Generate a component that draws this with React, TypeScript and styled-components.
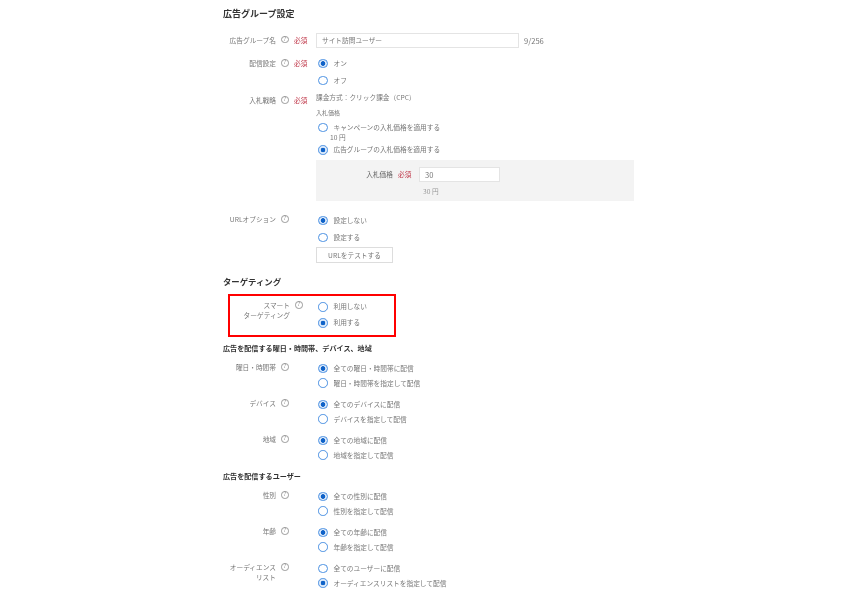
import React from "react";
import styled, { createGlobalStyle } from "styled-components";

const Global = createGlobalStyle`
  html, body {
    margin: 0;
    padding: 0;
    background: #fff;
  }
  body {
    font-family: "Noto Sans CJK JP", "Liberation Sans", sans-serif;
    font-size: 6.7px;
    color: #777;
  }
`;

const Page = styled.div`
  width: 850px;
  height: 600px;
  overflow: hidden;
  box-sizing: border-box;
  padding: 8px 0 0 223px;
  filter: blur(0.45px);
`;

const Heading = styled.h2<{ $top?: number; $size: number }>`
  margin: ${({ $top }) => $top ?? 0}px 0 0;
  font-size: ${({ $size }) => $size}px;
  line-height: 12px;
  font-weight: 700;
  color: #333;
`;

const SubHeading = styled.h3<{ $top: number }>`
  margin: ${({ $top }) => $top}px 0 0;
  font-size: 7.1px;
  line-height: 10px;
  font-weight: 700;
  color: #333;
`;

const Row = styled.div<{ $top: number }>`
  display: flex;
  align-items: flex-start;
  margin: ${({ $top }) => $top}px 0 0 6px;
`;

const Label = styled.div<{ $width?: number; $pad: number }>`
  width: ${({ $width }) => $width ?? 47}px;
  padding-top: ${({ $pad }) => $pad}px;
  flex: none;
  text-align: right;
  line-height: 10px;
  white-space: pre-line;
  color: #777;
`;

const Help = styled.span<{ $pad: number }>`
  flex: none;
  box-sizing: border-box;
  width: 7.5px;
  height: 7.5px;
  margin: ${({ $pad }) => $pad + 1}px -0.5px 0 5px;
  border: 0.8px solid #999;
  border-radius: 50%;
  font-size: 5.5px;
  line-height: 5.9px;
  text-align: center;
  color: #888;
`;

const Required = styled.span<{ $pad: number }>`
  flex: none;
  width: 14px;
  padding-top: ${({ $pad }) => $pad}px;
  margin: 0 8px 0 6px;
  line-height: 10px;
  color: #c0394b;
`;

const Spacer = styled.span<{ $width: number }>`
  flex: none;
  width: ${({ $width }) => $width}px;
`;

const Control = styled.div`
  flex: 1;
  min-width: 0;
`;

const Option = styled.div<{ $height: number; $top?: number }>`
  display: flex;
  align-items: center;
  height: ${({ $height }) => $height}px;
  margin-top: ${({ $top }) => $top ?? 0}px;
  padding-left: 2px;
`;

const Dot = styled.span<{ $on?: boolean }>`
  flex: none;
  box-sizing: border-box;
  width: 9.5px;
  height: 9.5px;
  margin-right: 6px;
  border: 1px solid #4a90e2;
  border-radius: 50%;
  background: ${({ $on }) =>
    $on
      ? "radial-gradient(circle, #0f62c8 0, #0f62c8 2px, #dbe9fa 2.6px)"
      : "#fff"};
`;

const OptionText = styled.span<{ $lift: number }>`
  line-height: 10px;
  margin-bottom: ${({ $lift }) => $lift}px;
`;

const Plain = styled.div<{ $top?: number; $left?: number; $height: number; $small?: boolean }>`
  margin: ${({ $top }) => $top ?? 0}px 0 0 ${({ $left }) => $left ?? 0}px;
  line-height: ${({ $height }) => $height}px;
  font-size: ${({ $small }) => ($small ? 6 : 6.7)}px;
`;

const TextInput = styled.div<{ $width: number; $size?: number }>`
  box-sizing: border-box;
  width: ${({ $width }) => $width}px;
  height: 15px;
  padding-left: 5px;
  border: 1px solid #e4e4e4;
  background: #fff;
  font-size: ${({ $size }) => $size ?? 6.7}px;
  line-height: 13px;
  color: #777;
`;

const InputLine = styled.div`
  display: flex;
  align-items: center;
  gap: 5px;
`;

const Counter = styled.span`
  font-size: 7.6px;
`;

const Panel = styled.div`
  width: 318px;
  height: 41px;
  margin-top: 2px;
  padding-top: 7px;
  box-sizing: border-box;
  background: #f3f3f3;
`;

const PanelLine = styled.div`
  display: flex;
  align-items: center;
`;

const PanelLabel = styled.span`
  width: 77px;
  line-height: 13px;
  text-align: right;
  color: #666;
`;

const PanelRequired = styled.span`
  width: 21px;
  margin-left: 5px;
  line-height: 13px;
  color: #c0394b;
`;

const PanelNote = styled.div`
  margin: 4px 0 0 107px;
  font-size: 6.7px;
  line-height: 10px;
  color: #999;
`;

const TestButton = styled.button`
  display: block;
  box-sizing: border-box;
  width: 77px;
  height: 16px;
  margin-top: 1px;
  padding: 0;
  border: 1px solid #ddd;
  background: #fff;
  font: inherit;
  color: #777;
`;

const Highlight = styled.div`
  box-sizing: border-box;
  width: 168px;
  height: 43px;
  margin: 7px 0 0 5px;
  padding-top: 3px;
  border: 2px solid #f00;
`;

const InnerRow = styled.div`
  display: flex;
  align-items: flex-start;
`;

type Opt = { text: string; on?: boolean };

const Radios = ({
  items,
  height,
  top,
  lift = 2,
}: {
  items: Opt[];
  height: number;
  top?: number;
  lift?: number;
}) => (
  <>
    {items.map((o, i) => (
      <Option key={o.text} $height={height} $top={i === 0 ? top : 0}>
        <Dot $on={o.on} />
        <OptionText $lift={lift}>{o.text}</OptionText>
      </Option>
    ))}
  </>
);

const TargetRow = ({
  label,
  top,
  on,
  items,
}: {
  label: string;
  top: number;
  on: number;
  items: string[];
}) => (
  <Row $top={top}>
    <Label $pad={1}>{label}</Label>
    <Help $pad={1}>?</Help>
    <Spacer $width={28} />
    <Control>
      <Radios
        height={14.5}
        lift={0}
        items={items.map((text, i) => ({ text, on: i === on }))}
      />
    </Control>
  </Row>
);

export default function App() {
  return (
    <>
      <Global />
      <Page>
        <Heading $size={9}>広告グループ設定</Heading>

        <Row $top={13}>
          <Label $pad={1.5}>広告グループ名</Label>
          <Help $pad={1.5}>?</Help>
          <Required $pad={1.5}>必須</Required>
          <Control>
            <InputLine>
              <TextInput $width={203}>サイト訪問ユーザー</TextInput>
              <Counter>9/256</Counter>
            </InputLine>
          </Control>
        </Row>

        <Row $top={7}>
          <Label $pad={3}>配信設定</Label>
          <Help $pad={3}>?</Help>
          <Required $pad={3}>必須</Required>
          <Control>
            <Radios height={17} items={[{ text: "オン", on: true }, { text: "オフ" }]} />
          </Control>
        </Row>

        <Row $top={3}>
          <Label $pad={3}>入札戦略</Label>
          <Help $pad={3}>?</Help>
          <Required $pad={3}>必須</Required>
          <Control>
            <Plain $height={10}>課金方式：クリック課金（CPC）</Plain>
            <Plain $top={6} $height={10} $small>
              入札価格
            </Plain>
            <Radios height={13} top={3} items={[{ text: "キャンペーンの入札価格を適用する" }]} />
            <Plain $left={14} $top={-2} $height={10}>
              10 円
            </Plain>
            <Radios height={16} items={[{ text: "広告グループの入札価格を適用する", on: true }]} />
            <Panel>
              <PanelLine>
                <PanelLabel>入札価格</PanelLabel>
                <PanelRequired>必須</PanelRequired>
                <TextInput $width={81} $size={7.6}>
                  30
                </TextInput>
              </PanelLine>
              <PanelNote>30 円</PanelNote>
            </Panel>
          </Control>
        </Row>

        <Row $top={11}>
          <Label $pad={2}>URLオプション</Label>
          <Help $pad={2}>?</Help>
          <Spacer $width={28} />
          <Control>
            <Radios height={17} items={[{ text: "設定しない", on: true }, { text: "設定する" }]} />
            <TestButton>URLをテストする</TestButton>
          </Control>
        </Row>

        <Heading $top={12} $size={8.4}>
          ターゲティング
        </Heading>

        <Highlight>
          <InnerRow>
            <Label $width={60} $pad={1}>
              {"スマート\nターゲティング"}
            </Label>
            <Help $pad={1}>?</Help>
            <Spacer $width={14} />
            <Control>
              <Radios height={16} items={[{ text: "利用しない" }, { text: "利用する", on: true }]} />
            </Control>
          </InnerRow>
        </Highlight>

        <SubHeading $top={6}>広告を配信する曜日・時間帯、デバイス、地域</SubHeading>
        <TargetRow
          top={8}
          label="曜日・時間帯"
          on={0}
          items={["全ての曜日・時間帯に配信", "曜日・時間帯を指定して配信"]}
        />
        <TargetRow
          top={7}
          label="デバイス"
          on={0}
          items={["全てのデバイスに配信", "デバイスを指定して配信"]}
        />
        <TargetRow
          top={7}
          label="地域"
          on={0}
          items={["全ての地域に配信", "地域を指定して配信"]}
        />

        <SubHeading $top={9}>広告を配信するユーザー</SubHeading>
        <TargetRow
          top={8}
          label="性別"
          on={0}
          items={["全ての性別に配信", "性別を指定して配信"]}
        />
        <TargetRow
          top={7}
          label="年齢"
          on={0}
          items={["全ての年齢に配信", "年齢を指定して配信"]}
        />
        <TargetRow
          top={7}
          label={"オーディエンス\nリスト"}
          on={1}
          items={["全てのユーザーに配信", "オーディエンスリストを指定して配信"]}
        />
      </Page>
    </>
  );
}
